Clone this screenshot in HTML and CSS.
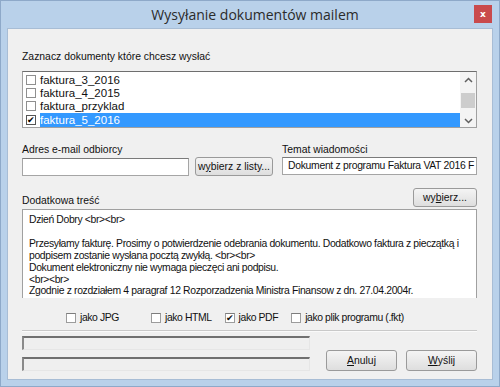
FILE: index.html
```html
<!DOCTYPE html>
<html lang="pl">
<head>
    <meta charset="UTF-8">
    <title>Wysyłanie dokumentów mailem</title>
    <link rel="stylesheet" href="styles.css">
</head>
<body>
    <div class="window">
        <!-- Pasek tytułu -->
        <div class="titlebar">
            <span class="title">Wysyłanie dokumentów mailem</span>
            <span class="close">x</span>
        </div>

        <div class="client">
            <div class="label first">Zaznacz dokumenty które chcesz wysłać</div>
            <div class="listbox">
                <div class="rows">
                    <div class="row"><span class="cb"></span>faktura_3_2016</div>
                    <div class="row"><span class="cb"></span>faktura_4_2015</div>
                    <div class="row"><span class="cb"></span>faktura_przyklad</div>
                    <div class="row"><span class="cb checked">&#10004;</span><span class="sel">faktura_5_2016</span></div>
                </div>
                <div class="scrollbar">
                    <svg class="arrow" width="9" height="6" viewBox="0 0 9 6"><path d="M1 5 L4.5 1.5 L8 5" fill="none" stroke="#606060" stroke-width="1.5"/></svg>
                    <div class="thumb"></div>
                    <svg class="arrow" width="9" height="6" viewBox="0 0 9 6"><path d="M1 1 L4.5 4.5 L8 1" fill="none" stroke="#606060" stroke-width="1.5"/></svg>
                </div>
            </div>

            <div class="fields">
                <div class="field">
                    <div class="label">Adres e-mail odbiorcy</div>
                    <div class="inline">
                        <div class="input email"></div>
                        <div class="button list">w<u>y</u>bierz z listy...</div>
                    </div>
                </div>
                <div class="field grow">
                    <div class="label">Temat wiadomości</div>
                    <div class="input subject">Dokument z programu Faktura VAT 2016 F</div>
                </div>
            </div>

            <div class="extra-head">
                <div class="label">Dodatkowa treść</div>
                <div class="button pick">wy<u>b</u>ierz...</div>
            </div>
            <div class="memo">
                <div>Dzień Dobry &lt;br&gt;&lt;br&gt;</div>
                <div>&nbsp;</div>
                <div>Przesyłamy fakturę. Prosimy o potwierdzenie odebrania dokumentu. Dodatkowo faktura z pieczątką i</div>
                <div>podpisem zostanie wysłana pocztą zwykłą. &lt;br&gt;&lt;br&gt;</div>
                <div>Dokument elektroniczny nie wymaga pieczęci ani podpisu.</div>
                <div>&lt;br&gt;&lt;br&gt;</div>
                <div>Zgodnie z rozdziałem 4 paragraf 12 Rozporzadzenia Ministra Finansow z dn. 27.04.2004r.</div>
            </div>

            <div class="options">
                <label class="opt jpg"><span class="box"></span>jako JPG</label>
                <label class="opt html"><span class="box"></span>jako HTML</label>
                <label class="opt pdf"><span class="box on">&#10004;</span>jako PDF</label>
                <label class="opt"><span class="box"></span>jako plik programu (.fkt)</label>
            </div>

            <div class="separator"></div>

            <div class="bottom">
                <div class="bars">
                    <div class="progress"></div>
                    <div class="progress"></div>
                </div>
                <div class="button big"><u>A</u>nuluj</div>
                <div class="button big"><u>W</u>yślij</div>
            </div>
        </div>
    </div>
</body>
</html>
```

FILE: styles.css
```css
body {
    margin: 0;
    font-family: 'Liberation Sans', sans-serif;
    font-size: 10.4px;
    color: #111;
    overflow: hidden;
}

.window {
    width: 500px;
    height: 387px;
    box-sizing: border-box;
    background-color: #b9d1ea;
    border: 1px solid #8ea9c9;
    padding: 0 6px 6px 6px;
    display: flex;
    flex-direction: column;
}

/* Pasek tytułu */
.titlebar {
    height: 27px;
    position: relative;
    display: flex;
    justify-content: center;
    align-items: center;
}

.title {
    font-family: 'Open Sans', 'Noto Sans', sans-serif;
    font-size: 14px;
    color: #2b2b2b;
    margin-left: 10px;
}

.close {
    position: absolute;
    right: 1px;
    top: 4px;
    width: 18px;
    height: 18px;
    background-color: #c94a4c;
    color: #fff;
    font-family: 'DejaVu Sans', sans-serif;
    font-weight: bold;
    font-size: 9px;
    display: flex;
    justify-content: center;
    align-items: center;
}

.client {
    flex: 1;
    background-color: #f0f0f0;
    border: 1px solid #a8bdd5;
    padding: 21px 15px 0 14px;
    display: flex;
    flex-direction: column;
}

.label {
    line-height: 13px;
    white-space: nowrap;
}

.listbox {
    margin-top: 8px;
    height: 57px;
    box-sizing: border-box;
    border: 1px solid #a0a0a0;
    border-top-color: #6e6e6e;
    background-color: #fff;
    display: flex;
}

.rows {
    flex: 1;
    padding-top: 1px;
    display: flex;
    flex-direction: column;
}

.row {
    height: 13.4px;
    display: flex;
    align-items: center;
    font-size: 11.5px;
}

.cb {
    width: 10px;
    height: 10px;
    box-sizing: border-box;
    border: 1px solid #8f8f8f;
    margin: 0 4px 0 3px;
    background: #fff;
    font-size: 9px;
    line-height: 8px;
    text-align: center;
}

.cb.checked {
    border-color: #555;
    color: #000;
}

.sel {
    flex: 1;
    background-color: #3399ff;
    color: #fff;
    height: 100%;
    display: flex;
    align-items: center;
}

.scrollbar {
    width: 16px;
    background-color: #f4f4f4;
    display: flex;
    flex-direction: column;
    align-items: center;
    justify-content: space-between;
    padding: 5px 0 3px 0;
}

.thumb {
    width: 14px;
    height: 15px;
    background-color: #cdcdcd;
}

.fields {
    margin-top: 15px;
    display: flex;
    gap: 9px;
}

.field {
    display: flex;
    flex-direction: column;
    gap: 1px;
}

.field.grow {
    flex: 1;
    min-width: 0;
}

.inline {
    display: flex;
    gap: 6px;
    align-items: center;
}

.input {
    height: 18px;
    box-sizing: border-box;
    border: 1px solid #a5a5a5;
    border-top-color: #7a7a7a;
    background-color: #fff;
    line-height: 16px;
    padding-left: 5px;
    white-space: nowrap;
    overflow: hidden;
}

.input.email {
    width: 167px;
    flex-shrink: 0;
}

.input.subject {
    letter-spacing: -0.3px;
}

.button {
    box-sizing: border-box;
    border: 1px solid #9a9a9a;
    border-radius: 3px;
    background: linear-gradient(#f4f4f4, #dedede);
    white-space: nowrap;
    display: flex;
    justify-content: center;
    align-items: center;
    flex-shrink: 0;
}

.button.list {
    width: 78px;
    height: 19px;
}

.button.pick {
    width: 64px;
    height: 19px;
}

.button.big {
    width: 71px;
    height: 21px;
}

.extra-head {
    margin-top: 12px;
    height: 19px;
    display: flex;
    justify-content: space-between;
    align-items: flex-end;
}

.memo {
    margin-top: 2px;
    height: 89px;
    box-sizing: border-box;
    border: 1px solid #a0a0a0;
    border-bottom: none;
    background-color: #fff;
    padding: 4px 5px 0 6px;
    line-height: 11.9px;
    letter-spacing: -0.35px;
    overflow: hidden;
    white-space: nowrap;
}

.options {
    margin-top: 14px;
    display: flex;
    padding-left: 44px;
    letter-spacing: -0.4px;
}

.opt {
    display: flex;
    align-items: center;
}

.opt.jpg {
    margin-right: 32px;
}

.opt.html {
    margin-right: 13px;
}

.opt.pdf {
    margin-right: 13px;
}

.box {
    width: 10px;
    height: 10px;
    box-sizing: border-box;
    border: 1px solid #9c9c9c;
    border-top-color: #7d7d7d;
    background-color: #fff;
    margin-right: 4px;
    font-size: 9px;
    line-height: 8px;
    text-align: center;
    letter-spacing: 0;
}

.separator {
    margin-top: 7px;
    height: 1px;
    background-color: #c9c9c9;
    border-bottom: 1px solid #fafafa;
}

.bottom {
    margin-top: 4px;
    display: flex;
    align-items: flex-end;
    gap: 9px;
}

.bars {
    width: 288px;
    margin-right: 7px;
    display: flex;
    flex-direction: column;
    gap: 7px;
}

.progress {
    height: 14px;
    box-sizing: border-box;
    border: 1px solid #e6e6e6;
    border-top: 2px solid #707070;
    border-left: 2px solid #8a8a8a;
    background-color: #efefef;
}
```
